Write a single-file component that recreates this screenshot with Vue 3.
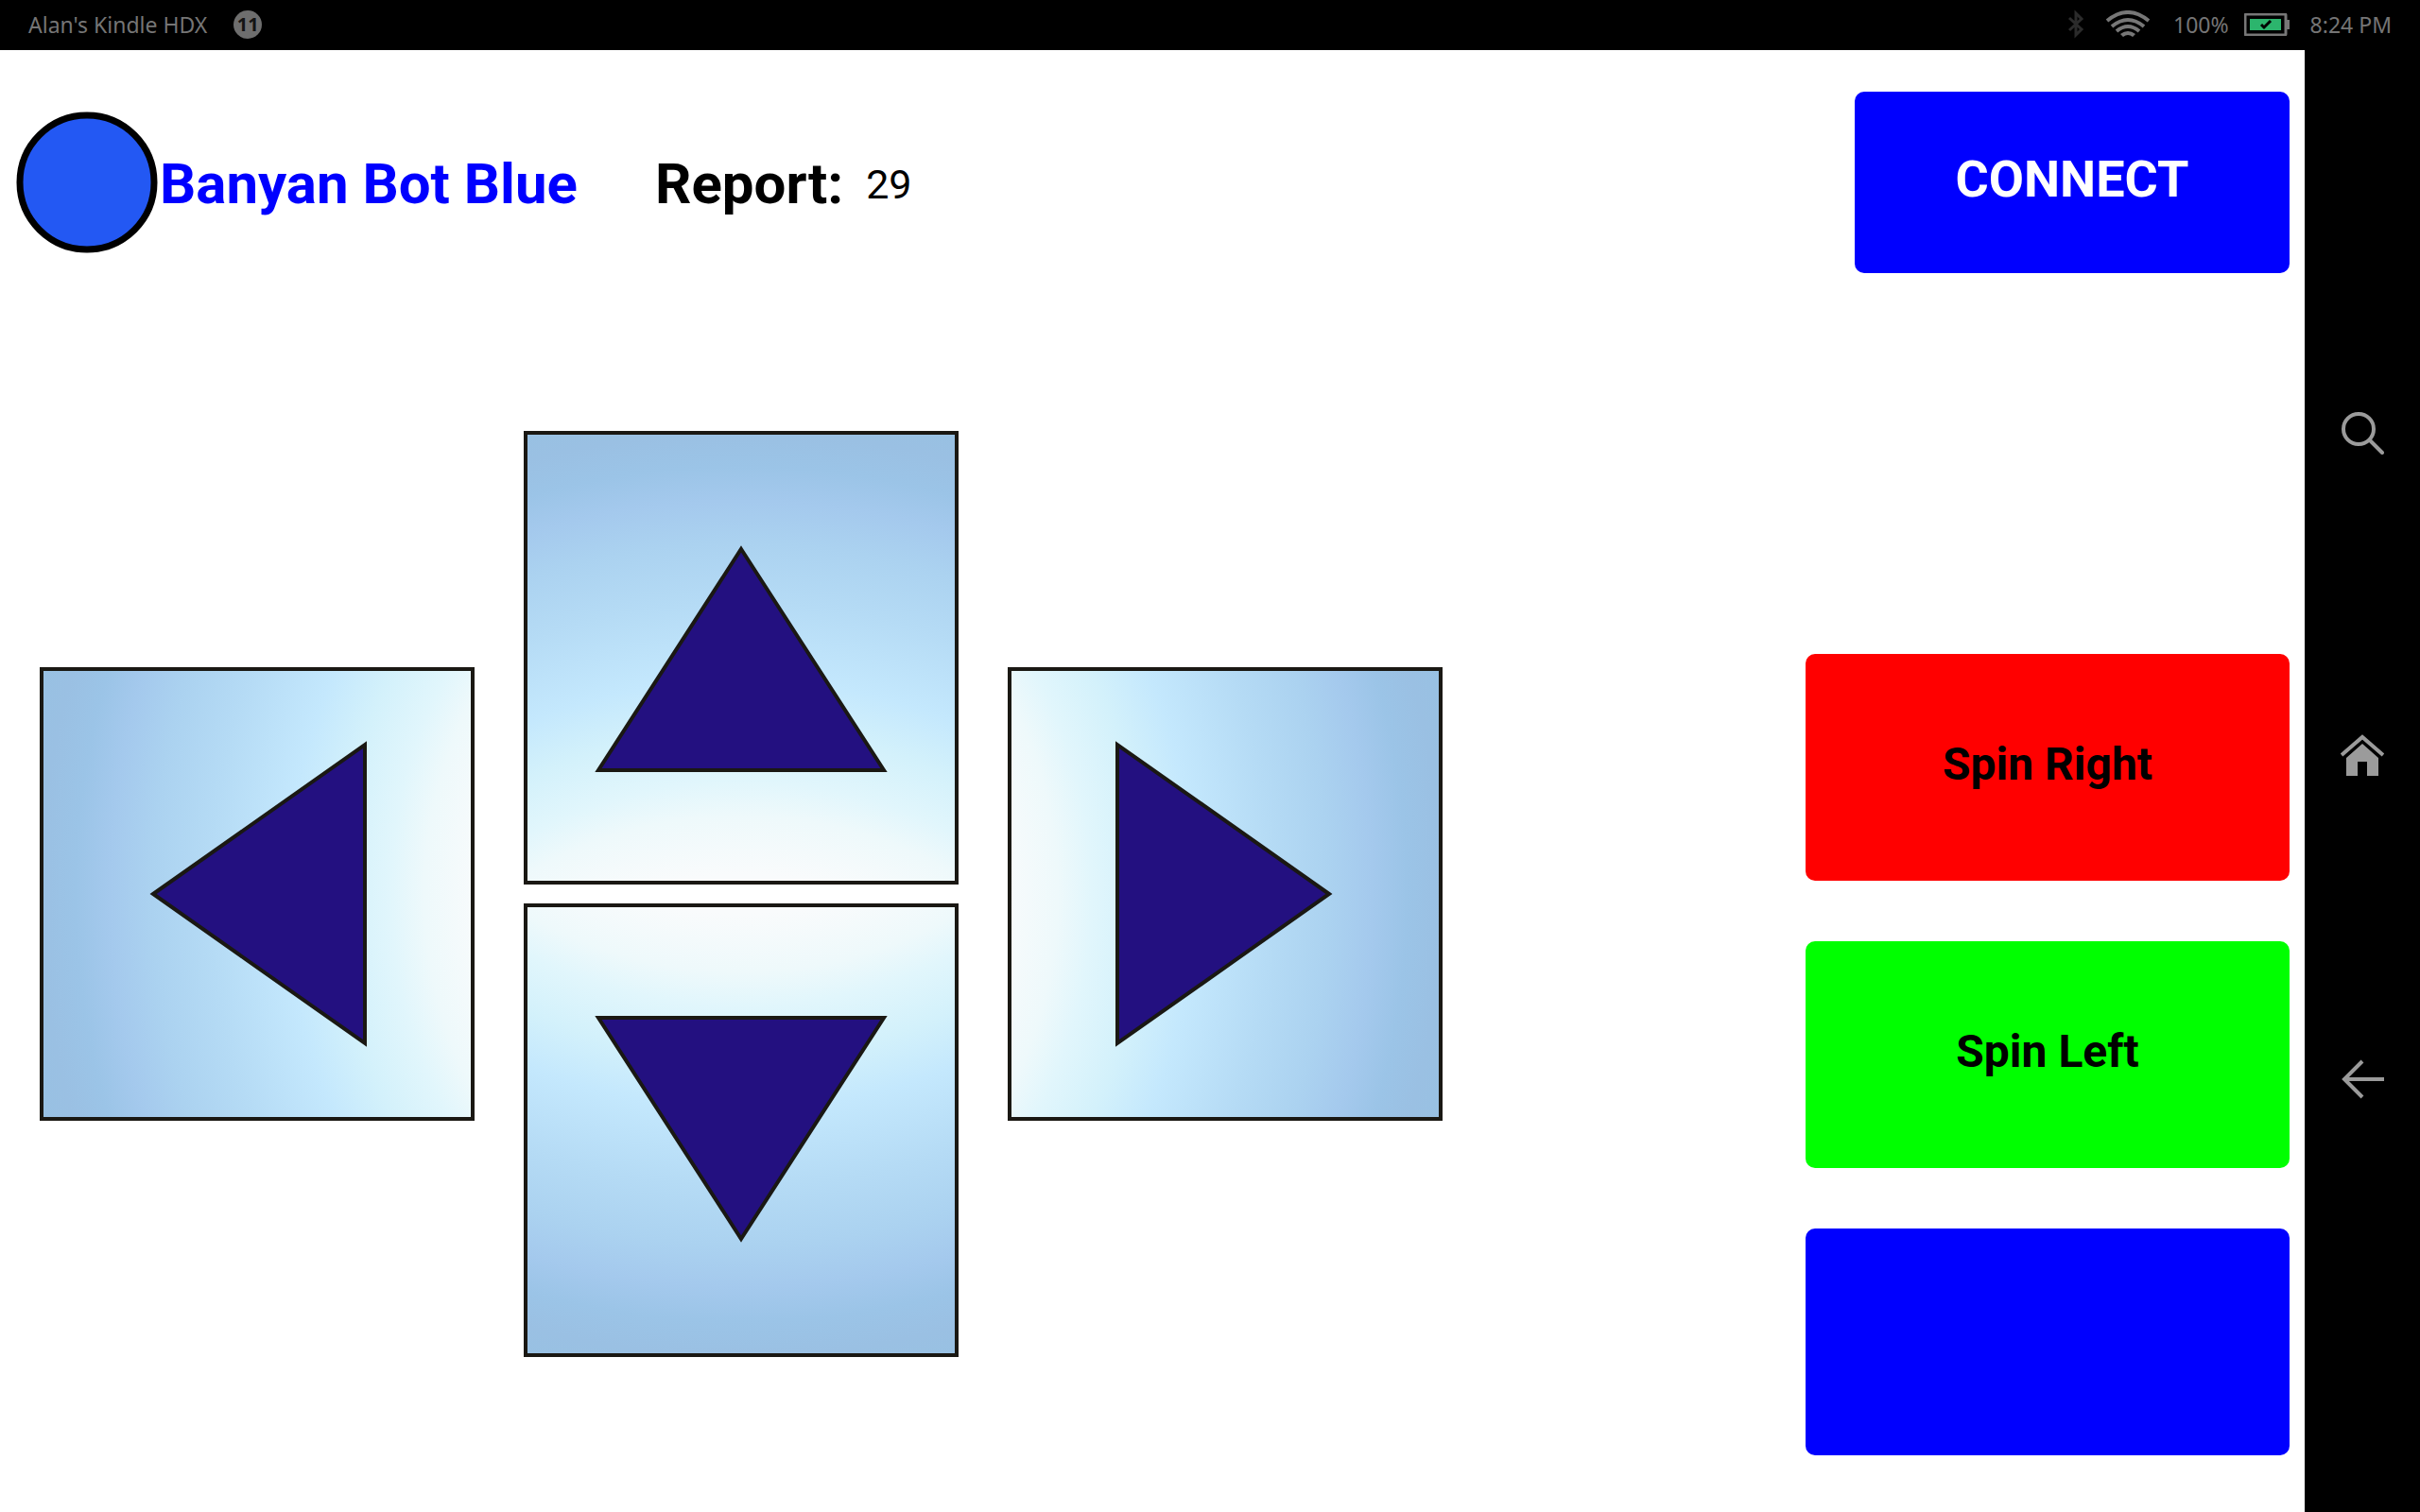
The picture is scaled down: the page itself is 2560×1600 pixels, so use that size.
<script setup>
import { ref } from 'vue'

const report = ref(29)

const pads = [
  { name: 'up', label: 'Forward', cx: 230, cy: 857, points: '230,125 381,359 79,359' },
  { name: 'left', label: 'Turn left', cx: 857, cy: 240, points: '120,240 344,82 344,398' },
  { name: 'right', label: 'Turn right', cx: -397, cy: 240, points: '340,240 116,82 116,398' },
  { name: 'down', label: 'Reverse', cx: 230, cy: -377, points: '230,355 381,121 79,121' }
]

const sky = [
  ['43%', '#f9fbfc'],
  ['50%', '#eef9fb'],
  ['54%', '#e1f6fc'],
  ['60%', '#d3f1fb'],
  ['66%', '#c4e8fd'],
  ['75%', '#b5dbf5'],
  ['82%', '#abd2f0'],
  ['87%', '#a4c9ed'],
  ['91%', '#9bc4e7'],
  ['95%', '#9ac0e3'],
  ['100%', '#97c1e2']
]

const spins = [
  { text: 'Spin Right', tone: 'red' },
  { text: 'Spin Left', tone: 'green' },
  { text: '', tone: 'blue', label: 'Unassigned' }
]
</script>

<template>
  <div class="screen">
    <header class="status">
      <span>Alan's Kindle HDX</span>
      <span class="badge">11</span>
      <div class="status-right">
        <svg class="bluetooth" width="18" height="32" viewBox="0 0 18 32" aria-hidden="true">
          <path d="M2 9 L15 21 L9 27 V4 L15 10 L2 22" fill="none" stroke="#2b2b2b" stroke-width="3" />
        </svg>
        <svg class="wifi" width="48" height="30" viewBox="0 0 48 30" aria-hidden="true">
          <g fill="none" stroke="#777" stroke-width="4">
            <path d="M2 11 Q24 -7 46 11" />
            <path d="M7 17 Q24 3 41 17" />
            <path d="M12 22 Q24 12 36 22" />
          </g>
          <path d="M16 25 Q24 19 32 25 L29 28 Q24 24 19 28 Z" fill="#777" />
        </svg>
        <span class="percent">100%</span>
        <svg class="battery" width="48" height="24" viewBox="0 0 48 24" aria-hidden="true">
          <rect x="1" y="1" width="43" height="22" rx="1" fill="none" stroke="#777" stroke-width="3" />
          <rect x="45" y="7" width="3" height="10" fill="#777" />
          <rect x="6" y="6" width="33" height="12" fill="#2cb56d" />
          <path d="M18 12 L21 15 L28 8" fill="none" stroke="#000" stroke-width="3" />
        </svg>
        <time>8:24 PM</time>
      </div>
    </header>

    <div class="body">
      <main>
        <div class="top">
          <svg class="bot" viewBox="0 0 150 150" aria-hidden="true">
            <circle cx="75" cy="75" r="71" fill="#2358f3" stroke="#000" stroke-width="7" />
          </svg>
          <div class="titles">
            <h1>Banyan Bot Blue</h1>
            <label for="report">Report:</label>
            <output id="report">{{ report }}</output>
          </div>
          <button class="block connect">CONNECT</button>
        </div>

        <div class="controls">
          <div class="dpad">
            <button v-for="pad in pads" :key="pad.name" class="pad" :class="pad.name" :aria-label="pad.label">
              <svg viewBox="0 0 460 480">
                <defs>
                  <radialGradient :id="'sky-' + pad.name" gradientUnits="userSpaceOnUse" :cx="pad.cx" :cy="pad.cy" r="900">
                    <stop v-for="[at, color] in sky" :key="at" :offset="at" :stop-color="color" />
                  </radialGradient>
                </defs>
                <rect x="2" y="2" width="456" height="476" :fill="`url(#sky-${pad.name})`" stroke="#1a1813" stroke-width="4" />
                <polygon :points="pad.points" fill="#231080" stroke="#1a1813" stroke-width="4" />
              </svg>
            </button>
          </div>
          <div class="spins">
            <button v-for="spin in spins" :key="spin.tone" class="block spin" :class="spin.tone" :aria-label="spin.label">
              {{ spin.text }}
            </button>
          </div>
        </div>
      </main>

      <nav>
        <button aria-label="Search">
          <svg viewBox="0 0 46 46" fill="none" stroke="#9b9b9b" stroke-width="4">
            <circle cx="19" cy="19" r="16" />
            <path d="M31 31 L44 44" stroke-linecap="round" />
          </svg>
        </button>
        <button aria-label="Home">
          <svg viewBox="0 0 46 46" fill="#9b9b9b">
            <path d="M1 22 L23 3 L45 22" fill="none" stroke="#9b9b9b" stroke-width="4" />
            <path d="M6 25 L23 10 L40 25 V44 H28 V29 H18 V44 H6 Z" />
          </svg>
        </button>
        <button aria-label="Back">
          <svg viewBox="0 0 46 46" fill="none" stroke="#9b9b9b" stroke-width="4">
            <path d="M46 23 H4 M23 4 L4 23 L23 42" />
          </svg>
        </button>
      </nav>
    </div>
  </div>
</template>

<style>
body {
  margin: 0;
  background: #000;
}
</style>

<style scoped>
.screen {
  display: flex;
  flex-direction: column;
  min-height: 100vh;
  background: #000;
  font-family: Roboto, "Liberation Sans", sans-serif;
}

button {
  display: block;
  padding: 0;
  border: 0;
  background: none;
  font-family: inherit;
}

svg {
  display: block;
}

.status {
  display: flex;
  align-items: center;
  box-sizing: border-box;
  height: 53px;
  padding: 0 30px 2px;
  color: #757575;
  font-family: "Noto Sans", "Open Sans", sans-serif;
  font-size: 23px;
  line-height: 32px;
}

.badge {
  width: 30px;
  height: 30px;
  margin-left: 28px;
  border-radius: 50%;
  background: #6e6e6e;
  color: #141414;
  font-size: 20px;
  font-weight: 700;
  line-height: 30px;
  text-align: center;
}

.status-right {
  display: flex;
  align-items: center;
  margin-left: auto;
}

.wifi {
  margin: 0 24px 0 22px;
}

.battery {
  margin: 0 22px 0 16px;
}

.body {
  display: flex;
  flex: 1;
}

main {
  flex: 1;
  min-width: 0;
  padding: 44px 16px 60px 17px;
  background: #fff;
}

.top {
  display: flex;
  align-items: center;
}

.bot {
  flex: none;
  width: 150px;
}

.titles {
  display: flex;
  align-items: center;
  padding: 4px 0 0 2px;
  font-size: 60px;
  font-weight: 700;
  line-height: 72px;
  white-space: nowrap;
}

h1 {
  margin: 0 82px 0 0;
  color: #00f;
  font-size: inherit;
}

output {
  margin-left: 24px;
  font-size: 43px;
  font-weight: 400;
}

.block {
  padding-bottom: 8px;
  border-radius: 10px;
  font-weight: 700;
}

.connect {
  width: 460px;
  height: 192px;
  margin-left: auto;
  background: #00f;
  color: #fff;
  font-size: 54px;
}

.controls {
  display: flex;
  justify-content: space-between;
  gap: 48px;
  margin-top: 167px;
}

.dpad {
  display: grid;
  flex: 0 1 1484px;
  grid-template-columns: repeat(3, 1fr);
  grid-template-areas:
    "left up right"
    "left down right";
  align-content: start;
  align-items: center;
  gap: 20px 52px;
  margin-left: 25px;
}

.up {
  grid-area: up;
}

.left {
  grid-area: left;
}

.right {
  grid-area: right;
}

.down {
  grid-area: down;
}

.pad svg {
  width: 100%;
}

.spins {
  display: flex;
  flex: 0 1 512px;
  flex-direction: column;
  gap: 64px;
  padding-top: 236px;
}

.spin {
  height: 240px;
  color: #000;
  font-size: 48px;
}

.red {
  background: #f00;
}

.green {
  background: #0f0;
}

.blue {
  background: #00f;
}

nav {
  display: flex;
  flex: none;
  flex-direction: column;
  align-items: center;
  justify-content: center;
  gap: 296px;
  width: 122px;
  padding-bottom: 53px;
  box-sizing: border-box;
}

nav svg {
  width: 46px;
}
</style>
